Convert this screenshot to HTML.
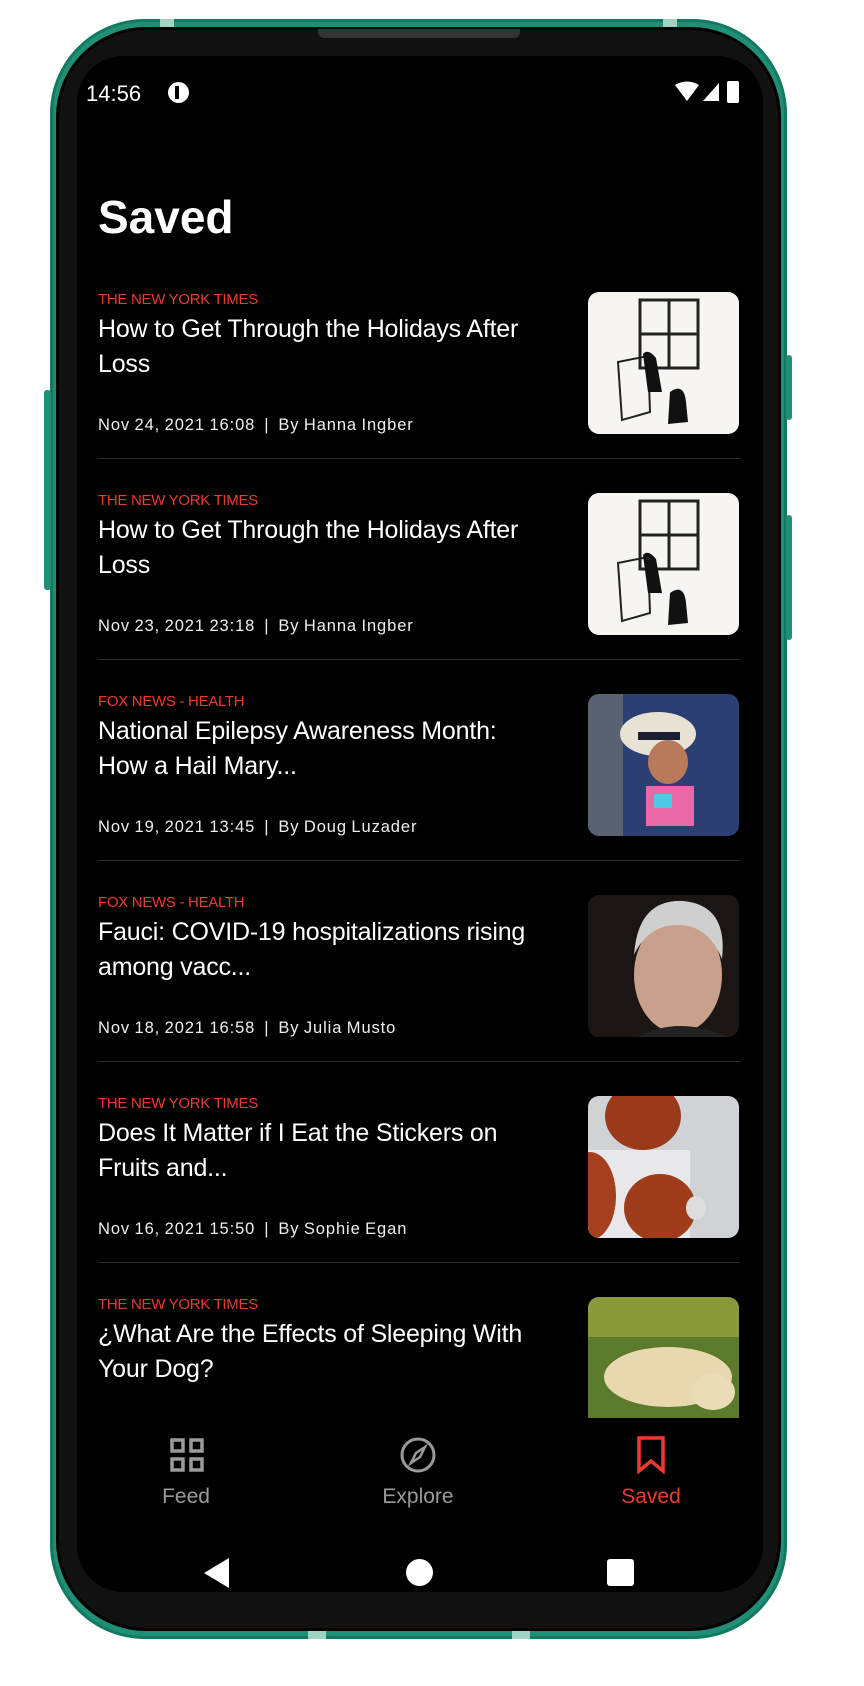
<!DOCTYPE html>
<html><head><meta charset="utf-8"><style>
*{margin:0;padding:0;box-sizing:border-box}
body{width:864px;height:1686px;background:#fff;position:relative;overflow:hidden;font-family:"Liberation Sans",sans-serif}
.a{position:absolute}
.frame{left:50px;top:19px;width:737px;height:1620px;border-radius:95px;background:#1f8f76;box-shadow:inset 0 0 0 3px #137a62}
.bezel{left:56px;top:27px;width:725px;height:1604px;border-radius:90px;background:#111;border:3px solid #000}
.scr{left:77px;top:56px;width:686px;height:1536px;border-radius:46px;background:#000;overflow:hidden}
.src{color:#ec3b2e;font-size:15px;letter-spacing:-0.3px}
.ttl{color:#fff;font-size:25px;line-height:35px;letter-spacing:-0.2px}
.meta{color:#eee;font-size:16.5px;letter-spacing:0.9px;word-spacing:-1px}
.div{height:1px;background:#2a2a2a;left:21px;width:642px}
.th{width:151px;height:142px;border-radius:11px;left:511px;overflow:hidden}
.nl{font-size:21px;color:#9a9a9a;text-align:center;width:160px}
</style></head><body>
<div class="a frame"></div>
<div class="a" style="left:160px;top:19px;width:14px;height:8px;background:#9fd3c4"></div>
<div class="a" style="left:663px;top:19px;width:14px;height:8px;background:#9fd3c4"></div>
<div class="a" style="left:308px;top:1630px;width:18px;height:9px;background:#9fd3c4"></div>
<div class="a" style="left:512px;top:1630px;width:18px;height:9px;background:#9fd3c4"></div>
<div class="a" style="left:44px;top:390px;width:7px;height:200px;border-radius:3px;background:#1f8f76"></div>
<div class="a" style="left:786px;top:355px;width:6px;height:65px;border-radius:3px;background:#1f8f76"></div>
<div class="a" style="left:786px;top:515px;width:6px;height:125px;border-radius:3px;background:#1f8f76"></div>
<div class="a bezel"></div>
<div class="a" style="left:318px;top:29px;width:202px;height:9px;border-radius:0 0 6px 6px;background:#333"></div>
<div class="a scr">
 <div class="a" style="left:9px;top:25px;color:#fff;font-size:22px">14:56</div>
 <div class="a" style="left:91px;top:26px;width:21px;height:21px;border-radius:50%;background:#fff"><div class="a" style="left:7px;top:4px;width:4px;height:13px;background:#000"></div></div>
 <svg class="a" style="left:598px;top:25px" width="66" height="26"><path d="M0 4 Q12 -3 24 4 L12 20Z" fill="#fff"/><path d="M44 2 L44 20 L28 20Z" fill="#fff"/><rect x="52" y="0" width="12" height="22" rx="2" fill="#fff"/></svg>
 <div class="a" style="left:21px;top:134px;color:#fff;font-size:46px;font-weight:bold;letter-spacing:0px">Saved</div>

 <div class="a" style="left:0;top:0;width:686px;height:1362px;overflow:hidden">
  <div class="a src" style="left:21px;top:235px">THE NEW YORK TIMES</div>
  <div class="a ttl" style="left:21px;top:256px;width:445px">How to Get Through the Holidays After Loss</div>
  <div class="a meta" style="left:21px;top:360px">Nov 24, 2021 16:08 &nbsp;|&nbsp; By Hanna Ingber</div>
  <div class="a th" style="top:236px;background:#f6f5f2"><svg width="151" height="142"><rect x="52" y="8" width="58" height="68" fill="none" stroke="#222" stroke-width="3"/><line x1="81" y1="8" x2="81" y2="76" stroke="#222" stroke-width="3"/><line x1="52" y1="42" x2="110" y2="42" stroke="#222" stroke-width="3"/><path d="M30 70 L60 64 L62 120 L34 128Z" fill="none" stroke="#222" stroke-width="2"/><path d="M55 62 Q60 56 68 66 L74 100 L60 100Z" fill="#111"/><path d="M82 100 Q96 90 98 110 L100 130 L80 132Z" fill="#111"/></svg></div>
  <div class="a div" style="top:402px"></div>
  <div class="a src" style="left:21px;top:436px">THE NEW YORK TIMES</div>
  <div class="a ttl" style="left:21px;top:457px;width:445px">How to Get Through the Holidays After Loss</div>
  <div class="a meta" style="left:21px;top:561px">Nov 23, 2021 23:18 &nbsp;|&nbsp; By Hanna Ingber</div>
  <div class="a th" style="top:437px;background:#f6f5f2"><svg width="151" height="142"><rect x="52" y="8" width="58" height="68" fill="none" stroke="#222" stroke-width="3"/><line x1="81" y1="8" x2="81" y2="76" stroke="#222" stroke-width="3"/><line x1="52" y1="42" x2="110" y2="42" stroke="#222" stroke-width="3"/><path d="M30 70 L60 64 L62 120 L34 128Z" fill="none" stroke="#222" stroke-width="2"/><path d="M55 62 Q60 56 68 66 L74 100 L60 100Z" fill="#111"/><path d="M82 100 Q96 90 98 110 L100 130 L80 132Z" fill="#111"/></svg></div>
  <div class="a div" style="top:603px"></div>
  <div class="a src" style="left:21px;top:637px">FOX NEWS - HEALTH</div>
  <div class="a ttl" style="left:21px;top:658px;width:445px">National Epilepsy Awareness Month: How a Hail Mary...</div>
  <div class="a meta" style="left:21px;top:762px">Nov 19, 2021 13:45 &nbsp;|&nbsp; By Doug Luzader</div>
  <div class="a th" style="top:638px;background:#2c3f72"><svg width="151" height="142"><rect x="0" y="0" width="35" height="142" fill="#5a6170"/><ellipse cx="70" cy="40" rx="38" ry="22" fill="#e8e2d4"/><rect x="50" y="38" width="42" height="8" fill="#1a1f33"/><ellipse cx="80" cy="68" rx="20" ry="22" fill="#b87a5a"/><rect x="58" y="92" width="48" height="40" fill="#e868a8"/><rect x="66" y="100" width="18" height="14" fill="#50c8e8"/></svg></div>
  <div class="a div" style="top:804px"></div>
  <div class="a src" style="left:21px;top:838px">FOX NEWS - HEALTH</div>
  <div class="a ttl" style="left:21px;top:859px;width:445px">Fauci: COVID-19 hospitalizations rising among vacc...</div>
  <div class="a meta" style="left:21px;top:963px">Nov 18, 2021 16:58 &nbsp;|&nbsp; By Julia Musto</div>
  <div class="a th" style="top:839px;background:#1b1614"><svg width="151" height="142"><ellipse cx="90" cy="80" rx="44" ry="58" fill="#c9a08c"/><path d="M46 60 Q50 4 95 6 Q140 10 134 64 Q120 30 90 30 Q60 30 46 60Z" fill="#cfcfcf"/><path d="M50 142 Q90 120 140 142Z" fill="#222"/></svg></div>
  <div class="a div" style="top:1005px"></div>
  <div class="a src" style="left:21px;top:1039px">THE NEW YORK TIMES</div>
  <div class="a ttl" style="left:21px;top:1060px;width:445px">Does It Matter if I Eat the Stickers on Fruits and...</div>
  <div class="a meta" style="left:21px;top:1164px">Nov 16, 2021 15:50 &nbsp;|&nbsp; By Sophie Egan</div>
  <div class="a th" style="top:1040px;background:#cfd3d5"><svg width="151" height="142"><rect x="0" y="54" width="102" height="88" fill="#e8e8ea"/><ellipse cx="55" cy="20" rx="38" ry="34" fill="#9a3a1a"/><ellipse cx="72" cy="112" rx="36" ry="34" fill="#9e3c1c"/><ellipse cx="2" cy="100" rx="26" ry="44" fill="#a4401e"/><ellipse cx="108" cy="112" rx="10" ry="12" fill="#ddd"/></svg></div>
  <div class="a div" style="top:1206px"></div>
  <div class="a src" style="left:21px;top:1240px">THE NEW YORK TIMES</div>
  <div class="a ttl" style="left:21px;top:1261px;width:445px">¿What Are the Effects of Sleeping With Your Dog?</div>
  <div class="a th" style="top:1241px;background:#5c7a2c"><svg width="151" height="142"><rect width="151" height="40" fill="#8a9a3a"/><ellipse cx="80" cy="80" rx="64" ry="30" fill="#e8d8b0"/><ellipse cx="125" cy="95" rx="22" ry="18" fill="#eadcb8"/></svg></div>
 </div>

 <svg class="a" style="left:93px;top:1382px" width="34" height="34"><g fill="none" stroke="#9a9a9a" stroke-width="3.5"><rect x="2" y="2" width="11" height="11"/><rect x="21" y="2" width="11" height="11"/><rect x="2" y="21" width="11" height="11"/><rect x="21" y="21" width="11" height="11"/></g></svg>
 <div class="a nl" style="left:29px;top:1429px">Feed</div>
 <svg class="a" style="left:323px;top:1381px" width="36" height="36"><circle cx="18" cy="18" r="16" fill="none" stroke="#9a9a9a" stroke-width="3"/><path d="M25 10 L20 20 L11 26 L16 16Z" fill="none" stroke="#9a9a9a" stroke-width="2.5"/></svg>
 <div class="a nl" style="left:261px;top:1429px">Explore</div>
 <svg class="a" style="left:560px;top:1380px" width="28" height="38"><path d="M2 2 H26 V35 L14 25 L2 35Z" fill="none" stroke="#ec3b2e" stroke-width="3.5"/></svg>
 <div class="a nl" style="left:494px;top:1429px;color:#ec3b2e">Saved</div>

 <svg class="a" style="left:127px;top:1502px" width="28" height="30"><path d="M25 0 V30 L0 15Z" fill="#fff"/></svg>
 <div class="a" style="left:329px;top:1503px;width:27px;height:27px;border-radius:50%;background:#fff"></div>
 <div class="a" style="left:530px;top:1503px;width:27px;height:27px;border-radius:3px;background:#fff"></div>
</div>
</body></html>
